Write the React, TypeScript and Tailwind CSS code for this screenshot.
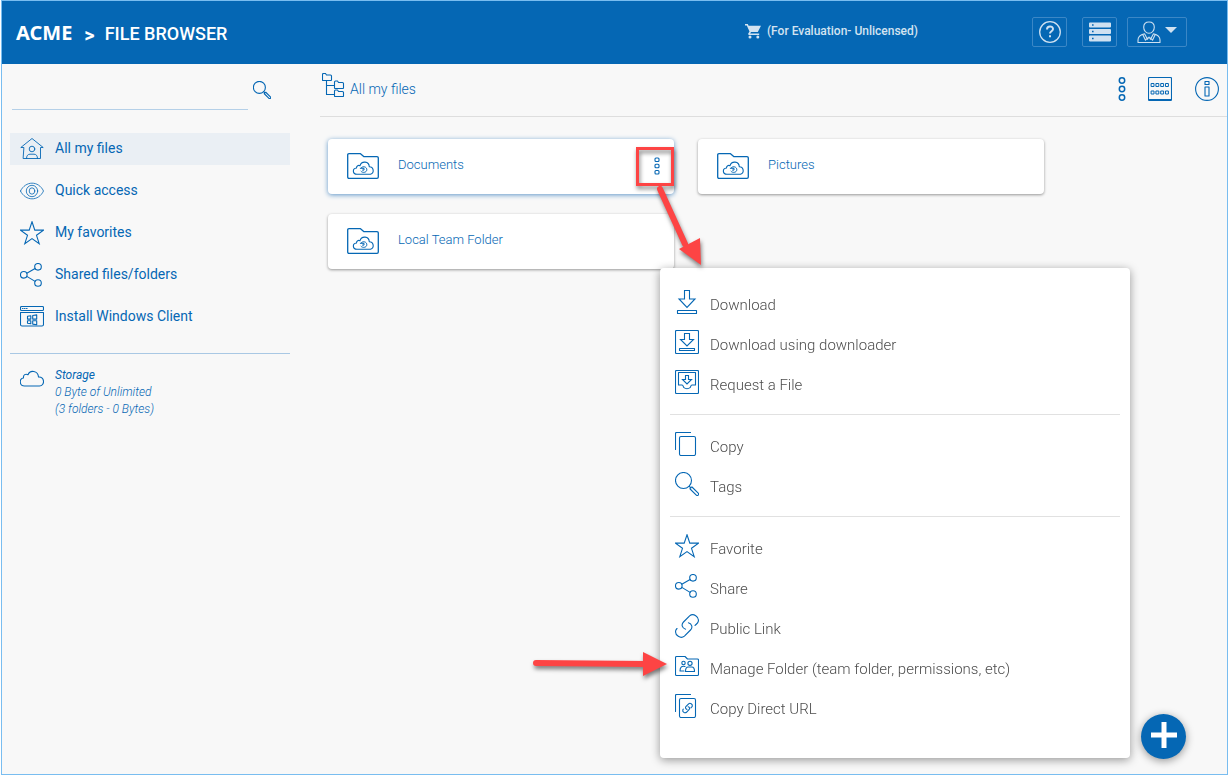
import React from "react";

type IconProps = { children: React.ReactNode; className?: string; box?: string };

function Icon({ children, className = "size-6", box = "0 0 24 24" }: IconProps) {
  return (
    <svg
      viewBox={box}
      className={`shrink-0 ${className}`}
      fill="none"
      stroke="currentColor"
      strokeWidth="1.1"
      strokeLinejoin="round"
      strokeLinecap="round"
      aria-hidden="true"
    >
      {children}
    </svg>
  );
}

const searchShape = (
  <>
    <circle cx="8.5" cy="8.5" r="8" />
    <path d="M14.3 14.3l1.6 1.6M17 15l6.2 6.2a1.3 1.3 0 0 1-1.9 1.9L15.1 17c-.4-.6.9-2.4 1.9-2z" />
  </>
);
const starShape = <path d="M12 .8l2.8 8.3h8.7l-7 5.2 2.7 8.4-7.2-5.1-7.2 5.1 2.7-8.4-7-5.2h8.7z" strokeLinejoin="miter" />;
const shareShape = (
  <>
    <circle cx="18" cy="3.8" r="3.3" />
    <circle cx="3.8" cy="11.8" r="3.3" />
    <circle cx="18" cy="20" r="3.3" />
    <path d="M6.8 10.2l8.3-4.8M6.8 13.4l8.3 5" />
  </>
);
const linkShape = (
  <>
    <path d="M10.6 15.2C7 14.2 6 10.600 8.500 8L14.600 1.900C18.300-1.200 24.300 2.600 23.300 7.300C22.900 9.300 21.200 10.200 20 11.500" />
    <path d="M13.400 8.800C17 9.800 18 13.400 15.500 16L9.400 22.100C5.700 25.200-.3 21.400.7 16.700C.9 15.800 1.400 15.100 2 14.500" />
  </>
);
const copyShape = (
  <>
    <path d="M.5 17.500V1.500q0-1 1-1H15.500" />
    <rect x="4.500" y="4.500" width="16" height="19" rx="1.500" />
  </>
);

const icons = {
  home: (
    <g strokeWidth=".9">
      <path d="M3.500 10.500H.8L12 1.500l11.200 9h-2.700v11h-17z" />
      <circle cx="12" cy="12" r="2.800" />
      <path d="M6.500 21.500c0-3 1.500-4.300 3.500-4.300h4c2 0 3.500 1.300 3.500 4.300" />
    </g>
  ),
  eye: (
    <g strokeWidth=".8">
      <path d="M.5 12C5.500 1.500 18.500 1.500 23.500 12C18.500 22.500 5.500 22.500.5 12z" />
      <circle cx="12" cy="12" r="5.700" />
      <ellipse cx="12" cy="12" rx="2.800" ry="3.200" />
    </g>
  ),
  star: starShape,
  share: shareShape,
  windows: (
    <>
      <rect x=".5" y="1.500" width="23" height="4" rx="1" />
      <path d="M.5 7.500h23v12q0 1.500-1.500 1.500H2Q.5 21 .5 19.500z" />
      <path d="M2.500 3.500h.6M4.500 3.500h.6M6.500 3.500h.6" />
      <path d="M7.500 11.300l3.300-.5v3.300H7.500zM12.700 10.500l4-.6v4.200h-4zM7.500 15.800h3.300v3l-3.300-.5zM12.700 15.800h4v3.900l-4-.6z" />
    </>
  ),
  cloud: <path d="M4.500 19C-.8 19-1 11.500 3.500 11C3 7.800 5.700 6.400 8 7.700C10 2.700 18 3.500 18.500 10C25 9.500 25 19 19.500 19z" />,
  search: searchShape,
  download: (
    <>
      <path d="M9.500.5h5v8.500H20L12 17.500 4 9h5.500z" strokeLinejoin="miter" />
      <rect x="2.500" y="20.500" width="19" height="3" />
    </>
  ),
  downloader: (
    <>
      <rect x=".5" y=".5" width="23" height="23" rx="1" />
      <path d="M9.500 3.500h5v6H18.500l-6.500 6.500-6.500-6.500h4z" strokeLinejoin="miter" />
      <rect x="4.500" y="18.500" width="15" height="2" />
    </>
  ),
  request: (
    <>
      <rect x=".5" y=".5" width="23" height="23" rx="1" />
      <path d="M3.500 2.500h17v12.500h-3.500c-1.500 0-1 1.700-2 2.700-1.500 1.300-4.500 1.300-6 0-1-1-.5-2.700-2-2.700H3.500z" />
      <path d="M10.500 5.500h3v4H16.500L12 14 7.500 9.500h3z" strokeLinejoin="miter" />
    </>
  ),
  copy: copyShape,
  link: linkShape,
  manage: (
    <>
      <path d="M.5 20.500v-17q0-1 1-1H10l2.500 2.500h10q1 0 1 1v14.500q0 1-1 1h-21q-1 0-1-1z" />
      <circle cx="8.500" cy="9" r="1.700" />
      <circle cx="15" cy="9.300" r="2.100" />
      <path d="M10 12.500c-3-1-5 .5-5 4.500h4M10.500 17.500c0-3 1-4.500 2.700-4.500h3.600c1.700 0 2.700 1.500 2.700 4.500z" />
    </>
  ),
  copyUrl: (
    <>
      {copyShape}
      <g transform="translate(7.500 9) scale(.42)" strokeWidth="2.600">
        {linkShape}
      </g>
    </>
  ),
  tree: (
    <>
      <path d="M.5 1.500q0-1 1-1h2l1 1.500h4q1 0 1 1V7q0 .5-.5.500H1Q.5 7.500.5 7zM12.500 9q0-1 1-1h2l1 1.500h4q1 0 1 1V15q0 .5-.5.500h-8q-.5 0-.5-.500zM12.500 18q0-1 1-1h2l1 1.500h4q1 0 1 1V23q0 .5-.5.500h-8q-.5 0-.5-.500z" />
      <path d="M4.500 7.500V21.500h8M4.500 12.500h8" />
    </>
  ),
  grid: (
    <>
      <rect x=".5" y=".5" width="23" height="23" rx="1" />
      <path d="M.5 22.500h23" />
      <path
        d="M3.500 6.500h2.500v3H3.500zM8.300 6.500h2.500v3H8.300zM13.100 6.500h2.500v3h-2.500zM17.900 6.500h2.500v3h-2.500zM3.500 14h2.500v3H3.500zM8.300 14h2.500v3H8.300zM13.100 14h2.500v3h-2.500zM17.900 14h2.500v3h-2.500z"
        strokeWidth="1"
      />
    </>
  ),
  info: (
    <>
      <circle cx="12" cy="12" r="11.400" />
      <rect x="10" y="4.500" width="4" height="3" />
      <rect x="10" y="10" width="4" height="9" />
    </>
  ),
};

type IconName = keyof typeof icons;

const navItems: { icon: IconName; label: string }[] = [
  { icon: "home", label: "All my files" },
  { icon: "eye", label: "Quick access" },
  { icon: "star", label: "My favorites" },
  { icon: "share", label: "Shared files/folders" },
  { icon: "windows", label: "Install Windows Client" },
];

const menuGroups: { icon: IconName; label: string }[][] = [
  [
    { icon: "download", label: "Download" },
    { icon: "downloader", label: "Download using downloader" },
    { icon: "request", label: "Request a File" },
  ],
  [
    { icon: "copy", label: "Copy" },
    { icon: "search", label: "Tags" },
  ],
  [
    { icon: "star", label: "Favorite" },
    { icon: "share", label: "Share" },
    { icon: "link", label: "Public Link" },
    { icon: "manage", label: "Manage Folder (team folder, permissions, etc)" },
    { icon: "copyUrl", label: "Copy Direct URL" },
  ],
];

function Header() {
  const button = "flex h-[30px] items-center justify-center rounded-xs border border-[#3b87c6]";
  return (
    <header className="flex h-[63px] items-center bg-[#0567b4] pr-10 pl-3.5 text-white">
      <span className="font-['Noto_Sans',sans-serif] text-xl font-bold">ACME</span>
      <span className="ml-3 pt-1 text-xl font-bold">&gt;</span>
      <h1 className="ml-2.5 pt-0.5 text-lg font-medium">FILE BROWSER</h1>
      <a href="#license" className="ml-auto flex items-center gap-1.5 pb-1 text-xs font-medium text-[#d3e3f1]">
        <svg viewBox="0 0 16 16" className="size-4" fill="currentColor" aria-hidden="true">
          <path d="M0 1h2.800l.8 1.700H16L12.800 9H6l-.8 1.500h9V12H3.800L3 11l1.500-2.500L1.800 2.500H0z" />
          <circle cx="5" cy="14" r="1.500" />
          <circle cx="12.800" cy="14" r="1.500" />
        </svg>
        (For Evaluation- Unlicensed)
      </a>
      <div className="ml-[114px] flex pb-0.5 text-[#cfe1f1]">
        <button type="button" aria-label="Help" className={`${button} w-[35px]`}>
          <Icon className="size-[22px]" box="0 0 22 22">
            <circle cx="11" cy="11" r="10.300" strokeWidth="1.300" />
            <path d="M8 8.500c0-4 6-4 6-.5 0 2.300-3 2.200-3 4.500" strokeWidth="2" strokeLinecap="butt" />
            <path d="M10 14.200h2v2h-2z" fill="currentColor" stroke="none" />
          </Icon>
        </button>
        <button type="button" aria-label="Servers" className={`${button} ml-[15px] w-[35px]`}>
          <svg viewBox="0 0 24 20" className="h-5 w-6" fill="currentColor" aria-hidden="true">
            <path fillRule="evenodd" d="M2 .5h20q1 0 1 1v3q0 1-1 1H2q-1 0-1-1v-3q0-1 1-1zM4 2.200v1.600h1.600V2.200zM2 7h20q1 0 1 1v3q0 1-1 1H2q-1 0-1-1V8q0-1 1-1zM4 8.700v1.600h1.600V8.700zM2 13.500h20q1 0 1 1v4q0 1-1 1H2q-1 0-1-1v-4q0-1 1-1zM4 15.700v1.600h1.600v-1.600z" />
          </svg>
        </button>
        <button type="button" aria-label="Account" className={`${button} ml-2.5 w-[60px] gap-1`}>
          <Icon className="size-6">
            <path d="M12 2c3.300 0 5.300 2 5.300 5.300 0 3.200-2.300 6-5.300 6s-5.300-2.800-5.300-6C6.700 4 8.700 2 12 2z" />
            <path d="M7.500 13.800C3 15 1 16.500 1 20v2.500h22V20c0-3.500-2-5-6.500-6.200M7.500 13.800l3 5.500L12 17l1.500 2.300 3-5.500M6 15l2.500 5.200 2-2.200M18 15l-2.500 5.200-2-2.200" />
          </Icon>
          <svg viewBox="0 0 12 6" className="mb-1 h-1.5 w-3" fill="currentColor" aria-hidden="true">
            <path d="M0 0h12L6 6z" />
          </svg>
        </button>
      </div>
    </header>
  );
}

function Sidebar() {
  return (
    <aside className="w-[288px] shrink-0 pt-3 pl-2">
      <form className="flex h-[34px] items-center gap-1" role="search">
        <input
          type="search"
          aria-label="Search files"
          className="ml-0.5 h-[34px] w-[236px] border-b border-[#b5d0e8] bg-transparent text-sm outline-none"
        />
        <button type="button" aria-label="Search" className="p-px pb-2">
          <Icon className="size-[18px]">
            <g strokeWidth="1.500">{searchShape}</g>
          </Icon>
        </button>
      </form>
      <nav className="mt-[23px] flex flex-col gap-2.5">
        {navItems.map((item, i) => (
          <a
            key={item.label}
            href="#files"
            className={`flex h-8 items-start gap-[11px] pl-2.5 ${i === 0 ? "bg-[#eaeff4]" : ""}`}
          >
            <Icon className="mt-1 size-6">{icons[item.icon]}</Icon>
            <span className="text-sm leading-[30px]">{item.label}</span>
          </a>
        ))}
      </nav>
      <hr className="mt-5 border-[#a9c8e4]" />
      <div className="flex gap-[11px] pt-[13px] pl-2.5 italic">
        <Icon>{icons.cloud}</Icon>
        <div className="text-xs leading-[17px]">
          <p>Storage</p>
          <p className="font-light">0 Byte of Unlimited</p>
          <p className="font-light">(3 folders - 0 Bytes)</p>
        </div>
      </div>
    </aside>
  );
}

function FolderCard({ name, active, children }: { name: string; active?: boolean; children?: React.ReactNode }) {
  return (
    <li
      className={`relative flex h-[55px] items-center rounded-sm bg-white pl-[19px] ${
        active ? "z-10 shadow-[0_1px_5px_#5f96c8]" : "shadow-[0_1px_3px_rgba(0,0,0,0.4)]"
      }`}
    >
      <Icon className="mb-0.5 h-[26px] w-8" box="0 0 32 26">
        <path d="M.7 24V2q0-1.300 1.300-1.300h11.500L17 3.700h13q1.300 0 1.300 1V24q0 1.300-1.300 1.300H2Q.7 25.300.7 24z" strokeWidth="1.300" />
        <path d="M10 21.300C5.500 21.300 5 15.500 9.500 15C9.500 12.500 11.500 12 13 12.700C14.500 7.500 22 8 22.300 13.700C27 14 27.500 20 23.500 21.300z" />
        <path d="M13.300 15.300h3.700v1.800h-1.500M14 18.300c1.500 2 5.800 1.300 5.800-1.600 0-2.900-3.500-3.800-5.300-2.200" strokeWidth="1" />
      </Icon>
      <a href="#folder" className="ml-[19px] pb-1 text-[13px] leading-5 font-light">
        {name}
      </a>
      {children}
    </li>
  );
}

function ContextMenu() {
  return (
    <div role="menu" className="absolute top-[129px] left-[332px] w-[470px] rounded-sm bg-white px-2.5 pt-[17px] pb-[29px] shadow-[0_2px_10px_rgba(0,0,0,0.4)]">
      {menuGroups.map((group, i) => (
        <div key={group[0].label} role="group" className={i > 0 ? "mt-[9px] border-t border-[#e1e1e1] pt-3" : ""}>
          {group.map((item) => (
            <button key={item.label} type="button" role="menuitem" className="flex h-10 w-full items-start gap-[11px] pl-[5px] text-left">
              <Icon className="mt-[5px] size-6">{icons[item.icon]}</Icon>
              <span className="text-[15px] leading-10 font-light text-[#4d4d4d]">{item.label}</span>
            </button>
          ))}
        </div>
      ))}
    </div>
  );
}

function Callouts() {
  return (
    <>
      <div className="pointer-events-none absolute top-2 right-0 h-[39px] w-[38px] border-3 border-[#fd4444] drop-shadow-[1px_3px_2px_rgba(0,0,0,0.5)]" />
      <svg
        viewBox="0 0 60 90"
        className="pointer-events-none absolute top-[45px] left-[325px] h-[90px] w-[60px] drop-shadow-[1px_3px_2px_rgba(0,0,0,0.5)]"
        fill="#fd4444"
        aria-hidden="true"
      >
        <path d="M7 5L32 60" stroke="#fd4444" strokeWidth="6" strokeLinecap="round" />
        <path d="M26 65L47 54L48 81z" />
      </svg>
      <svg
        viewBox="0 0 136 30"
        className="pointer-events-none absolute top-[510px] left-[204px] h-[30px] w-[136px] drop-shadow-[1px_3px_2px_rgba(0,0,0,0.5)]"
        fill="#fd4444"
        aria-hidden="true"
      >
        <path d="M4 14L114 15" stroke="#fd4444" strokeWidth="6" strokeLinecap="round" />
        <path d="M111 3L135 15L111 27z" />
      </svg>
    </>
  );
}

export default function App() {
  return (
    <div className="ml-px flex min-h-screen flex-col border border-[#79bdf0] bg-[#f8f8f8] font-['Roboto',sans-serif] text-[#0567b4]">
      <Header />
      <div className="flex flex-1">
        <Sidebar />
        <main className="ml-[30px] min-w-0 flex-1">
          <div className="flex h-[53px] items-start border-b border-[#dedede] pr-2">
            <a href="#files" className="flex items-start gap-1 pt-[9px] pl-0.5">
              <Icon>{icons.tree}</Icon>
              <span className="pt-1.5 text-sm leading-5 font-light">All my files</span>
            </a>
            <div className="ml-auto flex pt-[13px]">
              <button type="button" aria-label="More actions">
                <Icon>
                  <circle cx="12" cy="3.500" r="2.700" strokeWidth="1.500" />
                  <circle cx="12" cy="12" r="2.700" strokeWidth="1.500" />
                  <circle cx="12" cy="20.500" r="2.700" strokeWidth="1.500" />
                </Icon>
              </button>
              <button type="button" aria-label="Grid view" className="ml-3.5">
                <Icon>{icons.grid}</Icon>
              </button>
              <button type="button" aria-label="Information" className="ml-[23px]">
                <Icon>{icons.info}</Icon>
              </button>
            </div>
          </div>
          <ul className="grid grid-cols-[repeat(auto-fill,346px)] gap-x-6 gap-y-5 px-2 pt-[22px]">
            <FolderCard name="Documents" active>
              <button type="button" aria-label="Documents options" className="mr-[11px] mb-0.5 ml-auto">
                <Icon className="h-5 w-3" box="0 0 12 20">
                  <rect x="4" y="2" width="4" height="3.500" rx="1" />
                  <rect x="4" y="8.200" width="4" height="3.600" rx="1" />
                  <rect x="4" y="14.500" width="4" height="3.500" rx="1" />
                </Icon>
              </button>
              <ContextMenu />
              <Callouts />
            </FolderCard>
            <FolderCard name="Pictures" />
            <FolderCard name="Local Team Folder" />
          </ul>
        </main>
      </div>
      <button
        type="button"
        aria-label="Add"
        className="fixed right-[42px] bottom-4 flex size-[45px] items-center justify-center rounded-full bg-[#0567b4] text-white shadow-[0_2px_8px_rgba(0,0,0,0.4)]"
      >
        <svg viewBox="0 0 26 26" className="mb-1 size-[26px]" stroke="currentColor" strokeWidth="5" aria-hidden="true">
          <path d="M13 0v26M0 13h26" />
        </svg>
      </button>
    </div>
  );
}
